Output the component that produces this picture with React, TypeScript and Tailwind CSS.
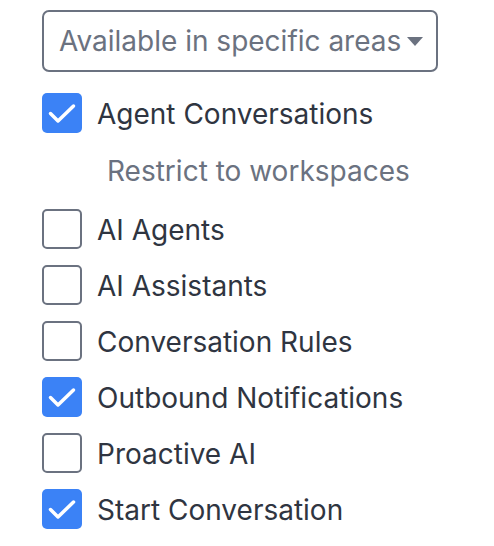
import React from "react";

const items = [
  { label: "AI Agents", checked: false },
  { label: "AI Assistants", checked: false },
  { label: "Conversation Rules", checked: false },
  { label: "Outbound Notifications", checked: true },
  { label: "Proactive AI", checked: false },
  { label: "Start Conversation", checked: true },
];

function Checkbox({ checked }: { checked: boolean }) {
  if (checked) {
    return (
      <div className="h-10 w-10 shrink-0 rounded-[5px] bg-[#3b82f6]">
        <svg width="40" height="40" viewBox="0 0 40 40" fill="none">
          <path d="M8.5 20.5l7.5 7.5L31.5 13" stroke="white" strokeWidth="3.5" strokeLinecap="round" strokeLinejoin="round" />
        </svg>
      </div>
    );
  }
  return <div className="h-10 w-10 shrink-0 rounded-[5px] border-2 border-[#6b7280] bg-white" />;
}

function Row({ label, checked }: { label: string; checked: boolean }) {
  return (
    <div className="flex h-14 items-center gap-[15px]">
      <Checkbox checked={checked} />
      <span className="pt-[2px] text-[28px] text-[#2f3541]">{label}</span>
    </div>
  );
}

export default function App() {
  return (
    <div className="min-h-screen bg-white pl-[42px] pt-[10px] font-['Inter',sans-serif]">
      <div className="flex h-[62px] w-[396px] items-center gap-[6px] rounded-[7px] border-2 border-[#6b7280] pl-[15px]">
        <span className="text-[28px] text-[#6b7280]">Available in specific areas</span>
        <svg width="16" height="9" viewBox="0 0 16 9">
          <path d="M0 0h16L8 9z" fill="#6b7280" />
        </svg>
      </div>
      <div className="mt-[13px]">
        <Row label="Agent Conversations" checked />
        <div className="flex h-[60px] items-center pl-[65px]">
          <span className="text-[28px] text-[#6b7280]">Restrict to workspaces</span>
        </div>
        {items.map((item) => (
          <Row key={item.label} label={item.label} checked={item.checked} />
        ))}
      </div>
    </div>
  );
}
